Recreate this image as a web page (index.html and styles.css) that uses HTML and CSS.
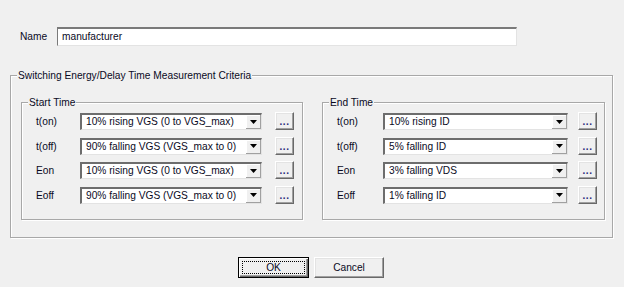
FILE: index.html
```html
<!DOCTYPE html>
<html>
<head>
<meta charset="utf-8">
<link rel="stylesheet" href="styles.css">
</head>
<body>
<div class="dialog">
  <div class="name-row">
    <span class="name-label">Name</span>
    <div class="text-input">manufacturer</div>
  </div>

  <div class="group outer">
    <span class="group-title">Switching Energy/Delay Time Measurement Criteria</span>
    <div class="subgroups">
      <div class="group sub start">
        <span class="group-title">Start Time</span>
        <div class="rows">
          <div class="row"><span class="row-label">t(on)</span><div class="combo"><span class="combo-text">10% rising VGS (0 to VGS_max)</span><span class="combo-btn"><svg width="7" height="4" viewBox="0 0 7 4"><path d="M0 0h7L3.5 4z" fill="#000"/></svg></span></div><span class="dots">...</span></div>
          <div class="row"><span class="row-label">t(off)</span><div class="combo"><span class="combo-text">90% falling VGS (VGS_max to 0)</span><span class="combo-btn"><svg width="7" height="4" viewBox="0 0 7 4"><path d="M0 0h7L3.5 4z" fill="#000"/></svg></span></div><span class="dots">...</span></div>
          <div class="row"><span class="row-label">Eon</span><div class="combo"><span class="combo-text">10% rising VGS (0 to VGS_max)</span><span class="combo-btn"><svg width="7" height="4" viewBox="0 0 7 4"><path d="M0 0h7L3.5 4z" fill="#000"/></svg></span></div><span class="dots">...</span></div>
          <div class="row"><span class="row-label">Eoff</span><div class="combo"><span class="combo-text">90% falling VGS (VGS_max to 0)</span><span class="combo-btn"><svg width="7" height="4" viewBox="0 0 7 4"><path d="M0 0h7L3.5 4z" fill="#000"/></svg></span></div><span class="dots">...</span></div>
        </div>
      </div>
      <div class="group sub end">
        <span class="group-title">End Time</span>
        <div class="rows">
          <div class="row"><span class="row-label">t(on)</span><div class="combo"><span class="combo-text">10% rising ID</span><span class="combo-btn"><svg width="7" height="4" viewBox="0 0 7 4"><path d="M0 0h7L3.5 4z" fill="#000"/></svg></span></div><span class="dots">...</span></div>
          <div class="row"><span class="row-label">t(off)</span><div class="combo"><span class="combo-text">5% falling ID</span><span class="combo-btn"><svg width="7" height="4" viewBox="0 0 7 4"><path d="M0 0h7L3.5 4z" fill="#000"/></svg></span></div><span class="dots">...</span></div>
          <div class="row"><span class="row-label">Eon</span><div class="combo"><span class="combo-text">3% falling VDS</span><span class="combo-btn"><svg width="7" height="4" viewBox="0 0 7 4"><path d="M0 0h7L3.5 4z" fill="#000"/></svg></span></div><span class="dots">...</span></div>
          <div class="row"><span class="row-label">Eoff</span><div class="combo"><span class="combo-text">1% falling ID</span><span class="combo-btn"><svg width="7" height="4" viewBox="0 0 7 4"><path d="M0 0h7L3.5 4z" fill="#000"/></svg></span></div><span class="dots">...</span></div>
        </div>
      </div>
    </div>
  </div>

  <div class="actions">
    <div class="btn default"><span class="focus">OK</span></div>
    <div class="btn">Cancel</div>
  </div>
</div>
</body>
</html>
```

FILE: styles.css
```css
html, body {
  margin: 0;
  padding: 0;
}
body {
  background: #f0f0f0;
  font-family: "Liberation Sans", Arial, sans-serif;
  font-size: 10.2px;
  color: #0a0a1e;
  width: 624px;
  height: 287px;
  overflow: hidden;
}

.name-row {
  display: flex;
  align-items: center;
  padding: 27px 0 0 20px;
  height: 19px;
}
.name-label {
  width: 37px;
}
.text-input {
  box-sizing: border-box;
  width: 460px;
  height: 19px;
  background: #fff;
  border-top: 2px solid #7a7a7a;
  border-left: 1px solid #7a7a7a;
  border-right: 1px solid #e3e3e3;
  border-bottom: 1px solid #e3e3e3;
  padding: 1px 0 0 4px;
  line-height: 14px;
}

.group {
  box-sizing: border-box;
  border: 1px solid #a8a8a8;
  box-shadow: inset 1px 1px #fff, 1px 1px #fff;
}
.group-title {
  display: block;
  width: max-content;
  margin: -7px 0 0 6px;
  padding: 0 1px;
  background: #f0f0f0;
  line-height: 13px;
}

.outer {
  margin: 29px 0 0 10px;
  width: 603px;
  height: 163px;
}
.subgroups {
  display: flex;
  gap: 19px;
  margin: 20px 0 0 10px;
}
.sub {
  height: 118px;
}
.sub .group-title {
  margin-left: 6px;
}
.start {
  width: 282px;
}
.end {
  width: 283px;
}

.rows {
  display: flex;
  flex-direction: column;
  gap: 7.5px;
  margin-top: 4px;
  padding-left: 14px;
}
.row {
  display: flex;
  align-items: flex-start;
  height: 17px;
}
.row-label {
  line-height: 17px;
}
.start .row-label { width: 44px; }
.end .row-label { width: 46px; }

.combo {
  box-sizing: border-box;
  display: flex;
  height: 17px;
  background: #fff;
  border-top: 2px solid #6d6d6d;
  border-left: 2px solid #6d6d6d;
  border-right: 1px solid #e3e3e3;
  border-bottom: 1px solid #e3e3e3;
}
.start .combo { width: 182px; }
.end .combo { width: 185px; }
.combo-text {
  flex: 1;
  padding-left: 4px;
  line-height: 14px;
  white-space: nowrap;
  overflow: hidden;
}
.combo-btn {
  box-sizing: border-box;
  width: 15px;
  height: 14px;
  display: flex;
  align-items: center;
  justify-content: center;
  background: #f0f0f0;
  border-right: 1px solid #a0a0a0;
  border-bottom: 1px solid #a0a0a0;
  box-shadow: inset 1px 1px #fff;
}

.dots {
  box-sizing: border-box;
  width: 19px;
  height: 18px;
  margin-top: -1px;
  background: #f0f0f0;
  border: 1px solid;
  border-color: #fff #696969 #696969 #fff;
  box-shadow: inset -1px -1px #a0a0a0, inset 1px 1px #e3e3e3;
  text-align: center;
  line-height: 17px;
  font-size: 10px;
  font-weight: bold;
  color: #2a2a7a;
  letter-spacing: 0.5px;
}
.start .dots { margin-left: 13px; }
.end .dots { margin-left: 10px; }

.actions {
  display: flex;
  gap: 5px;
  margin: 19px 0 0 238px;
}
.btn {
  box-sizing: border-box;
  width: 70px;
  height: 21px;
  background: #f0f0f0;
  border: 1px solid;
  border-color: #fff #696969 #696969 #fff;
  box-shadow: inset -1px -1px #a0a0a0, inset 1px 1px #e3e3e3;
  display: flex;
  align-items: center;
  justify-content: center;
}
.btn.default {
  width: 71px;
  border: 1px solid #000;
  box-shadow: inset 1px 1px #fff, inset -1px -1px #696969, inset -2px -2px #a0a0a0;
  padding: 3px;
}
.focus {
  box-sizing: border-box;
  flex: 1;
  align-self: stretch;
  border: 1px dotted #000;
  display: flex;
  align-items: center;
  justify-content: center;
}
```
